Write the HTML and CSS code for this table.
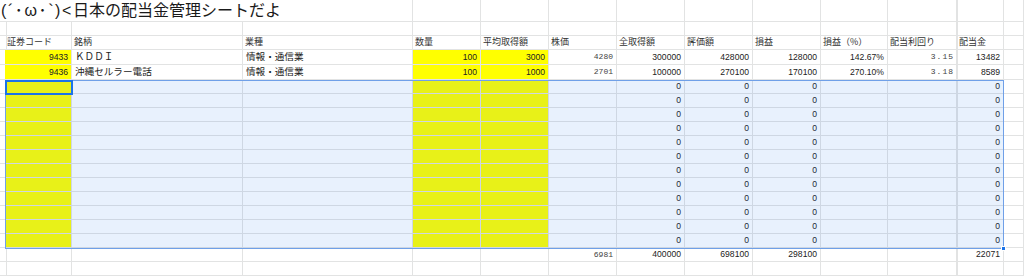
FILE: index.html
```html
<!DOCTYPE html>
<html lang="ja">
<head>
<meta charset="utf-8">
<title>配当金管理シート</title>
<link rel="stylesheet" href="styles.css">
</head>
<body>
<div class="sheet">
  <!-- title row -->
  <div class="c title"><span class="face">(´･ω･`)&lt;</span>日本の配当金管理シートだよ</div>
  <div class="c"></div><div class="c"></div><div class="c"></div><div class="c"></div><div class="c"></div><div class="c"></div><div class="c"></div><div class="c"></div><div class="c cm"></div><div class="c"></div>

  <!-- blank row -->
  <div class="c"></div><div class="c"></div><div class="c"></div><div class="c"></div><div class="c"></div><div class="c"></div><div class="c"></div><div class="c"></div><div class="c"></div><div class="c"></div><div class="c"></div><div class="c"></div><div class="c cm"></div><div class="c"></div>

  <!-- header row -->
  <div class="c"></div>
  <div class="c h">証券コード</div>
  <div class="c h">銘柄</div>
  <div class="c h">業種</div>
  <div class="c h">数量</div>
  <div class="c h">平均取得額</div>
  <div class="c h">株価</div>
  <div class="c h">全取得額</div>
  <div class="c h">評価額</div>
  <div class="c h">損益</div>
  <div class="c h">損益（%）</div>
  <div class="c h">配当利回り</div>
  <div class="c h cm">配当金</div>
  <div class="c"></div>

  <!-- data row 1 -->
  <div class="c"></div>
  <div class="c n y">9433</div>
  <div class="c t">ＫＤＤＩ</div>
  <div class="c t">情報・通信業</div>
  <div class="c n y">100</div>
  <div class="c n y">3000</div>
  <div class="c n m">4280</div>
  <div class="c n">300000</div>
  <div class="c n">428000</div>
  <div class="c n">128000</div>
  <div class="c n">142.67%</div>
  <div class="c n m yl">3.15</div>
  <div class="c n cm">13482</div>
  <div class="c"></div>

  <!-- data row 2 -->
  <div class="c"></div>
  <div class="c n y">9436</div>
  <div class="c t">沖縄セルラー電話</div>
  <div class="c t">情報・通信業</div>
  <div class="c n y">100</div>
  <div class="c n y">1000</div>
  <div class="c n m">2701</div>
  <div class="c n">100000</div>
  <div class="c n">270100</div>
  <div class="c n">170100</div>
  <div class="c n">270.10%</div>
  <div class="c n m yl">3.18</div>
  <div class="c n cm">8589</div>
  <div class="c"></div>

  <!-- empty rows (12) -->
  <div class="c"></div><div class="c y"></div><div class="c"></div><div class="c"></div><div class="c y"></div><div class="c y"></div><div class="c"></div><div class="c n">0</div><div class="c n">0</div><div class="c n">0</div><div class="c"></div><div class="c"></div><div class="c n cm">0</div><div class="c"></div>
  <div class="c"></div><div class="c y"></div><div class="c"></div><div class="c"></div><div class="c y"></div><div class="c y"></div><div class="c"></div><div class="c n">0</div><div class="c n">0</div><div class="c n">0</div><div class="c"></div><div class="c"></div><div class="c n cm">0</div><div class="c"></div>
  <div class="c"></div><div class="c y"></div><div class="c"></div><div class="c"></div><div class="c y"></div><div class="c y"></div><div class="c"></div><div class="c n">0</div><div class="c n">0</div><div class="c n">0</div><div class="c"></div><div class="c"></div><div class="c n cm">0</div><div class="c"></div>
  <div class="c"></div><div class="c y"></div><div class="c"></div><div class="c"></div><div class="c y"></div><div class="c y"></div><div class="c"></div><div class="c n">0</div><div class="c n">0</div><div class="c n">0</div><div class="c"></div><div class="c"></div><div class="c n cm">0</div><div class="c"></div>
  <div class="c"></div><div class="c y"></div><div class="c"></div><div class="c"></div><div class="c y"></div><div class="c y"></div><div class="c"></div><div class="c n">0</div><div class="c n">0</div><div class="c n">0</div><div class="c"></div><div class="c"></div><div class="c n cm">0</div><div class="c"></div>
  <div class="c"></div><div class="c y"></div><div class="c"></div><div class="c"></div><div class="c y"></div><div class="c y"></div><div class="c"></div><div class="c n">0</div><div class="c n">0</div><div class="c n">0</div><div class="c"></div><div class="c"></div><div class="c n cm">0</div><div class="c"></div>
  <div class="c"></div><div class="c y"></div><div class="c"></div><div class="c"></div><div class="c y"></div><div class="c y"></div><div class="c"></div><div class="c n">0</div><div class="c n">0</div><div class="c n">0</div><div class="c"></div><div class="c"></div><div class="c n cm">0</div><div class="c"></div>
  <div class="c"></div><div class="c y"></div><div class="c"></div><div class="c"></div><div class="c y"></div><div class="c y"></div><div class="c"></div><div class="c n">0</div><div class="c n">0</div><div class="c n">0</div><div class="c"></div><div class="c"></div><div class="c n cm">0</div><div class="c"></div>
  <div class="c"></div><div class="c y"></div><div class="c"></div><div class="c"></div><div class="c y"></div><div class="c y"></div><div class="c"></div><div class="c n">0</div><div class="c n">0</div><div class="c n">0</div><div class="c"></div><div class="c"></div><div class="c n cm">0</div><div class="c"></div>
  <div class="c"></div><div class="c y"></div><div class="c"></div><div class="c"></div><div class="c y"></div><div class="c y"></div><div class="c"></div><div class="c n">0</div><div class="c n">0</div><div class="c n">0</div><div class="c"></div><div class="c"></div><div class="c n cm">0</div><div class="c"></div>
  <div class="c"></div><div class="c y"></div><div class="c"></div><div class="c"></div><div class="c y"></div><div class="c y"></div><div class="c"></div><div class="c n">0</div><div class="c n">0</div><div class="c n">0</div><div class="c"></div><div class="c"></div><div class="c n cm">0</div><div class="c"></div>
  <div class="c"></div><div class="c y"></div><div class="c"></div><div class="c"></div><div class="c y"></div><div class="c y"></div><div class="c"></div><div class="c n">0</div><div class="c n">0</div><div class="c n">0</div><div class="c"></div><div class="c"></div><div class="c n cm">0</div><div class="c"></div>

  <!-- totals row -->
  <div class="c"></div><div class="c"></div><div class="c"></div><div class="c"></div><div class="c"></div><div class="c"></div>
  <div class="c n m">6981</div>
  <div class="c n">400000</div>
  <div class="c n">698100</div>
  <div class="c n">298100</div>
  <div class="c"></div><div class="c"></div>
  <div class="c n cm">22071</div>
  <div class="c"></div>

  <!-- last row -->
  <div class="c"></div><div class="c"></div><div class="c"></div><div class="c"></div><div class="c"></div><div class="c"></div><div class="c"></div><div class="c"></div><div class="c"></div><div class="c"></div><div class="c"></div><div class="c"></div><div class="c cm"></div><div class="c"></div>

  <!-- selection overlays -->
  <div class="sel"></div>
  <div class="act"></div>
  <div class="hdl"></div>
</div>
</body>
</html>
```

FILE: styles.css
```css
html, body {
  margin: 0;
  padding: 0;
  background: #ffffff;
  overflow: hidden;
}

.sheet {
  position: relative;
  display: grid;
  grid-template-columns: 5px 67px 171px 170px 68px 68px 68px 68px 68px 68px 67px 69px 47px 1fr;
  grid-template-rows: 22px 14px 14px 15px 15px repeat(12, 14px) 14px 14px;
  width: 1024px;
  height: 276px;
  overflow: hidden;
  font-family: "Liberation Sans", "Noto Sans CJK JP", sans-serif;
  color: #222222;
}

.c {
  box-sizing: border-box;
  border-right: 1px solid #e2e3e3;
  border-bottom: 1px solid #e2e3e3;
  display: flex;
  align-items: center;
  padding: 0 3px;
  font-size: 8.6px;
  line-height: 1;
  white-space: nowrap;
  overflow: hidden;
  min-width: 0;
}

.title {
  grid-column: 1 / 5;
  font-size: 16px;
  padding-left: 1px;
  padding-top: 1px;
  color: #1a1a1a;
  font-family: "Liberation Sans", "Noto Sans CJK JP", sans-serif;
}

.face {
  letter-spacing: 1.6px;
}

.n {
  justify-content: flex-end;
}

.y {
  background: #ffff00;
}

.m {
  font-family: "Liberation Mono", monospace;
  font-size: 8px;
  color: #444444;
}

.yl {
  letter-spacing: 1px;
  padding-right: 2px;
}

.h {
  font-family: "Noto Sans CJK JP", sans-serif;
  font-size: 9px;
  color: #333333;
  padding-left: 2px;
  padding-bottom: 2px;
}

.t {
  font-family: "Noto Sans CJK JP", sans-serif;
  font-size: 9.6px;
  padding-left: 3px;
}

.cm {
  box-shadow: inset 1px 0 0 #e2e3e3;
}

.sel {
  position: absolute;
  left: 5px;
  top: 80px;
  width: 999px;
  height: 169px;
  box-sizing: border-box;
  background: rgba(26, 115, 232, 0.1);
  border: 1px solid #6fa0e8;
}

.act {
  position: absolute;
  left: 5px;
  top: 80px;
  width: 68px;
  height: 15px;
  box-sizing: border-box;
  border: 2px solid #1a73e8;
}

.hdl {
  position: absolute;
  left: 1001px;
  top: 246px;
  width: 5px;
  height: 5px;
  box-sizing: border-box;
  background: #1a73e8;
  border: 1px solid #ffffff;
}
```
